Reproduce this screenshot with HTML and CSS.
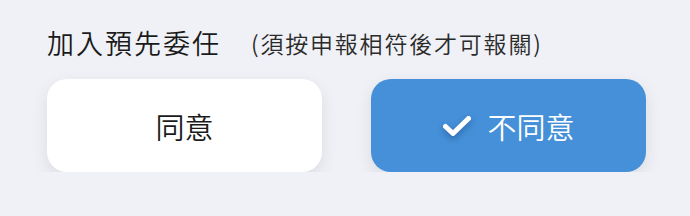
FILE: index.html
```html
<!DOCTYPE html>
<html lang="zh-Hant">
<head>
<meta charset="utf-8">
<link rel="stylesheet" href="styles.css">
</head>
<body>
<div class="panel">
  <div class="title-row">
    <span class="title">加入預先委任</span>
    <span class="note">(須按申報相符後才可報關)</span>
  </div>
  <div class="choices">
    <button class="choice">同意</button>
    <button class="choice selected">
      <svg class="check" viewBox="0 0 30 22" width="30" height="22" aria-hidden="true">
        <path d="M3.5 11.5 L11 18.5 L26.5 3.5" fill="none" stroke="#fff" stroke-width="5" stroke-linecap="round" stroke-linejoin="round"/>
      </svg>
      <span>不同意</span>
    </button>
  </div>
</div>
</body>
</html>
```

FILE: styles.css
```css
html, body {
  margin: 0;
  padding: 0;
  background: #f0f1f6;
}
body {
  font-family: "Noto Sans CJK TC", "Noto Sans", sans-serif;
  font-weight: 350;
  color: #1a1a1a;
}
.panel {
  padding: 25px 44px 0 47px;
  display: flex;
  flex-direction: column;
  gap: 18px;
}
.title-row {
  display: flex;
  align-items: center;
  height: 36px;
}
.title {
  font-size: 27px;
  line-height: 36px;
  letter-spacing: 2px;
}
.note {
  font-size: 23px;
  line-height: 36px;
  letter-spacing: 1.8px;
  margin-left: 30px;
  color: #2a2a2a;
}
.choices {
  display: flex;
  gap: 49px;
}
.choice {
  flex: 1;
  height: 93px;
  border: none;
  border-radius: 20px;
  background: #fff;
  color: #1a1a1a;
  font-family: inherit;
  font-weight: 350;
  font-size: 29px;
  display: flex;
  align-items: center;
  justify-content: center;
  gap: 15px;
  box-shadow: 0 6px 16px rgba(40, 50, 80, 0.10);
  padding: 0;
}
.choice.selected {
  background: #4590d8;
  color: #fff;
}
.check {
  filter: drop-shadow(0 3px 3px rgba(0, 30, 80, 0.35));
}
```
